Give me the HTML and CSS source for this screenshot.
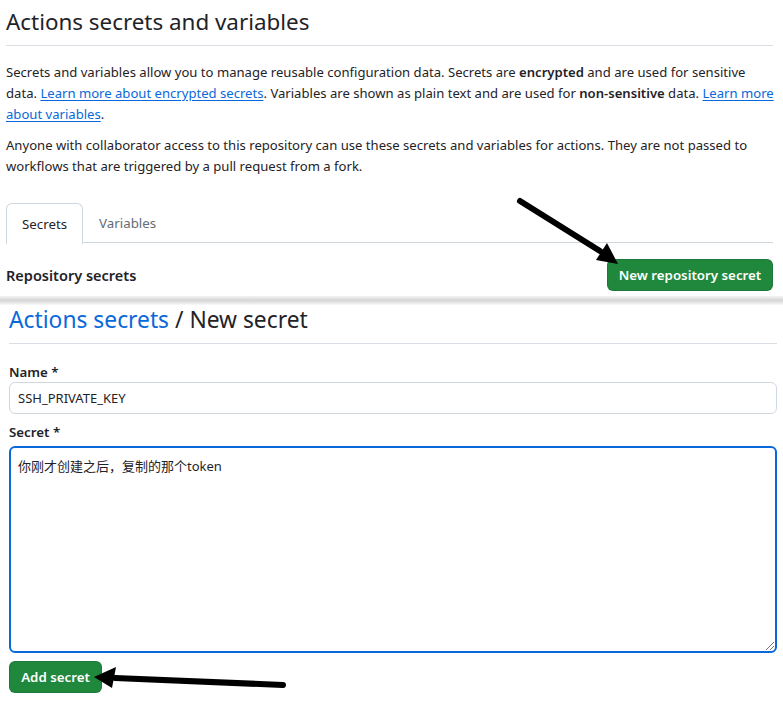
FILE: index.html
```html
<!DOCTYPE html>
<html>
<head>
<meta charset="utf-8">
<link rel="stylesheet" href="styles.css">
</head>
<body>
<div class="page">
  <section class="top">
    <h1 class="title">Actions secrets and variables</h1>
    <p class="desc">Secrets and variables allow you to manage reusable configuration data. Secrets are <b>encrypted</b> and are used for sensitive data. <a href="#">Learn more about encrypted secrets</a>. Variables are shown as plain text and are used for <b>non-sensitive</b> data. <a href="#">Learn more about variables</a>.</p>
    <p class="desc">Anyone with collaborator access to this repository can use these secrets and variables for actions. They are not passed to workflows that are triggered by a pull request from a fork.</p>
    <div class="tabs">
      <div class="tab active">Secrets</div>
      <div class="tab">Variables</div>
    </div>
    <div class="repo-row">
      <h2 class="repo-title">Repository secrets</h2>
      <button class="btn-primary btn-new">New repository secret</button>
    </div>
  </section>
  <div class="seam"></div>
  <section class="bottom">
    <h1 class="title crumbs"><a href="#">Actions secrets</a> / New secret</h1>
    <label class="label">Name *</label>
    <div class="input">SSH_PRIVATE_KEY</div>
    <label class="label label-secret">Secret *</label>
    <div class="textarea">你刚才创建之后，复制的那个token<span class="grip"></span></div>
    <button class="btn-primary btn-add">Add secret</button>
  </section>
  <svg class="arrows" width="783" height="705" viewBox="0 0 783 705">
    <g stroke="#000" stroke-width="6" stroke-linecap="round" fill="none">
      <line x1="520" y1="201" x2="600" y2="251"/>
      <line x1="283" y1="685" x2="115" y2="678"/>
    </g>
    <g fill="#000">
      <polygon points="618,264 596,260 607,243"/>
      <polygon points="94,677 116,667 112,688"/>
    </g>
  </svg>
</div>
</body>
</html>
```

FILE: styles.css
```css
* { box-sizing: border-box; }
html, body { margin: 0; padding: 0; background: #fff; }
body {
  font-family: "Noto Sans", "Noto Sans CJK SC", sans-serif;
  font-size: 13.1px;
  color: #1f2328;
  width: 783px;
  height: 705px;
  overflow: hidden;
}
.page { position: relative; width: 783px; height: 705px; }
a { color: #0969da; text-decoration: underline; text-underline-offset: 2px; }
b { font-weight: 600; }

.top { padding: 0 8px 0 6px; height: 296px; }
.title {
  margin: 0;
  font-weight: 400;
  font-size: 22.4px;
  line-height: 30px;
  padding: 7px 0 8px;
  border-bottom: 1px solid #d8dee4;
}
.top .title { margin-right: 2px; }
.desc { margin: 16px 0 0; line-height: 21px; }
.desc + .desc { margin-top: 10px; }

.tabs {
  display: flex;
  margin-top: 26px;
  border-bottom: 1px solid #d0d7de;
  height: 40px;
  margin-right: 2px;
}
.tab {
  padding: 0 16px;
  line-height: 40px;
  color: #656d76;
  font-size: 13.3px;
}
.tab.active {
  color: #1f2328;
  border: 1px solid #d0d7de;
  border-bottom: none;
  border-radius: 6px 6px 0 0;
  background: #fff;
  margin-bottom: -1px;
  height: 41px;
  line-height: 40px;
  padding: 0 15px;
}
.repo-row {
  display: flex;
  align-items: center;
  justify-content: space-between;
  margin-top: 16px;
  margin-right: 2px;
}
.repo-title { margin: 0; font-size: 14.5px; font-weight: 600; }
.btn-primary {
  font-family: inherit;
  font-size: 13.3px;
  font-weight: 600;
  color: #fff;
  background: #1f883d;
  border: 1px solid rgba(31,35,40,0.15);
  border-radius: 6px;
  height: 32px;
  padding: 0 14px;
}
.btn-new { width: 166px; padding: 0; }

.seam {
  height: 9px;
  background: linear-gradient(#f4f4f4, #d6d6d6 45%, #e2e2e2 70%, #fafafa);
}
.bottom { padding: 0 6px 0 9px; }
.crumbs { padding: 0 0 8px; font-size: 22.8px; line-height: 30px; border-bottom: 1px solid #d8dee4; }
.crumbs a { text-decoration: none; }
.label { display: block; font-weight: 600; font-size: 13.3px; margin-top: 18px; line-height: 20px; }
.label-secret { margin-top: 8px; }
.input {
  margin-top: 0;
  height: 32px;
  border: 1px solid #d0d7de;
  border-radius: 6px;
  padding: 0 8px;
  line-height: 30px;
  font-size: 13px;
}
.textarea {
  position: relative;
  margin-top: 4px;
  height: 207px;
  border: 2px solid #0969da;
  border-radius: 6px;
  padding: 8px 7px;
  font-size: 13px;
  line-height: 20px;
}
.grip {
  position: absolute;
  right: 1px; bottom: 1px;
  width: 8px; height: 8px;
  background: linear-gradient(135deg, transparent 45%, #777 45%, #777 55%, transparent 55%, transparent 70%, #777 70%, #777 80%, transparent 80%);
}
.btn-add { margin-top: 8px; width: 93px; padding: 0; }

.arrows { position: absolute; left: 0; top: 0; pointer-events: none; }
```
